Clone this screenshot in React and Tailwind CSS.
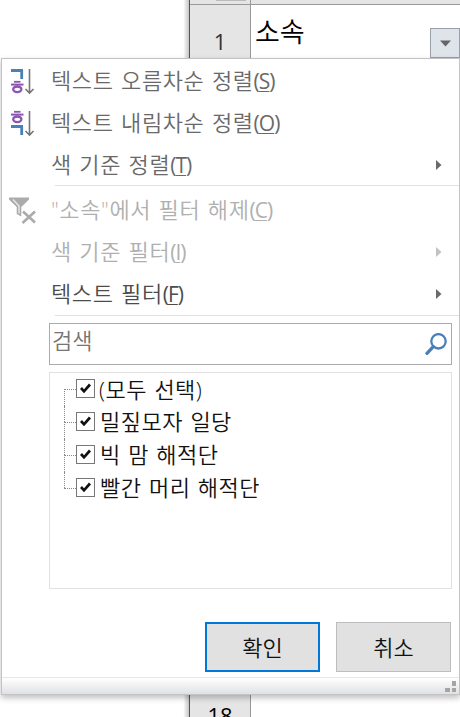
import React, { useState } from "react";

const MENU_TOP = [
  { label: "텍스트 오름차순 정렬", hotkey: "S", icon: "asc" },
  { label: "텍스트 내림차순 정렬", hotkey: "O", icon: "desc" },
  { label: "색 기준 정렬", hotkey: "T", submenu: true },
];

const MENU_FILTER = [
  { label: "\"소속\"에서 필터 해제", hotkey: "C", icon: "clear", disabled: true },
  { label: "색 기준 필터", hotkey: "I", submenu: true, disabled: true },
  { label: "텍스트 필터", hotkey: "F", submenu: true, strong: true },
];

const OPTIONS = ["(모두 선택)", "밀짚모자 일당", "빅 맘 해적단", "빨간 머리 해적단"];

const SortIcon = ({ desc }) => (
  <svg className="block" width="28" height="28" viewBox="0 0 28 28" fill="none">
    {/* Giyeok */}
    <path
      d={desc ? "M3 16.5H15M13.7 16V25" : "M3 2.5H15M13.7 2V11"}
      stroke="#4a80b8"
      strokeWidth="2.8"
    />
    {/* Hieut */}
    <g stroke="#8b55b0" transform={desc ? "translate(0 -12)" : undefined}>
      <path d="M6 13.8H12.5" strokeWidth="1.8" />
      <path d="M3 16.6H15.5" strokeWidth="2" />
      <ellipse cx="9.3" cy="21.3" rx="4.1" ry="2.8" strokeWidth="2.3" />
    </g>
    <path d="M21.5 1V25M17.5 21L21.5 25L25.5 21" stroke="#757575" strokeWidth="1.6" />
  </svg>
);

const ClearFilterIcon = () => (
  <svg className="block" width="28" height="28" viewBox="0 0 28 28" fill="none">
    <path d="M1 0.5H21V2.5L13.3 10V19.5L8.7 17V10L1 2.5Z" fill="#ababab" />
    <path d="M5 2.5L11 9V16.5" stroke="#e8e8e8" strokeWidth="1.4" />
    <path d="M15 14.5L27 25.5M27 14.5L14.5 26" stroke="#ababab" strokeWidth="2.6" />
  </svg>
);

const MenuItem = ({ item }) => {
  const color = item.disabled
    ? "text-[#b0b0b0]"
    : item.strong
      ? "text-[#4c4c4c]"
      : "text-[#696969]";

  return (
    <div className={`flex h-[42px] items-center ${color}`}>
      <div className="w-[49px] shrink-0 pl-[6px]">
        {item.icon === "asc" && <SortIcon />}
        {item.icon === "desc" && <SortIcon desc />}
        {item.icon === "clear" && <ClearFilterIcon />}
      </div>
      <div className="flex items-center whitespace-nowrap pb-[4px] text-[22px] leading-[38px] font-[350]">
        <span className="tracking-[0.6px] [word-spacing:1.2px]">{item.label}</span>
        <span className="pt-[2px] text-[21px] font-normal tracking-[-1px]">
          (<span className="underline decoration-1 underline-offset-[2px]">{item.hotkey}</span>)
        </span>
      </div>
      {item.submenu && (
        <svg className="mr-[17px] mb-[3px] ml-auto" width="6" height="10" viewBox="0 0 6 10">
          <path d="M0 0L5.5 5L0 10Z" fill={item.disabled ? "#c2c2c2" : "#6a6a6a"} />
        </svg>
      )}
    </div>
  );
};

const Option = ({ label, checked, onToggle, first, last }) => (
  <div className="flex h-[33px] cursor-default items-center" onClick={onToggle}>
    {/* Tree lines */}
    <div className="flex h-full w-[12px] shrink-0 flex-col">
      <div className={`h-[16px] ${first ? "" : "border-l border-dotted border-[#888]"}`} />
      <div
        className={`flex-1 border-t border-dotted border-[#888] ${last ? "" : "border-l"}`}
      />
    </div>
    <div className="mb-[2px] flex size-[19px] shrink-0 items-center justify-center border border-[#777] bg-white">
      {checked && (
        <svg width="11" height="11" viewBox="0 0 11 11" fill="none">
          <path d="M1 5L4 8.3L10 1.5" stroke="#111" strokeWidth="2.7" />
        </svg>
      )}
    </div>
    <span
      className={`whitespace-nowrap text-[22px] font-[350] tracking-[0.5px] text-[#111] [word-spacing:1.2px] ${
        first ? "ml-[4px] leading-[33px]" : "ml-[5px] pb-[3px] leading-[30px]"
      }`}
    >
      {label}
    </span>
  </div>
);

const App = () => {
  const [checked, setChecked] = useState([true, true, true, true]);

  const toggle = (index) => {
    setChecked(
      index === 0
        ? checked.map(() => !checked[0])
        : checked.map((c, i) => (i === index ? !c : c))
    );
  };

  return (
    <div className="flex h-[717px] w-[460px] flex-col overflow-hidden bg-white font-['Open_Sans','Noto_Sans_CJK_KR',sans-serif]">
      {/* SHEET TOP */}
      <div className="flex h-[58px] shrink-0">
        <div className="w-[189px] bg-linear-to-r from-white from-97% to-[#c5c5c5]" />
        <div className="flex w-[62px] flex-col border-r border-l border-r-[#999] border-l-[#217346] bg-[#e5e5e5]">
          <div className="h-[5px] border-b border-[#999] pl-[26px]">
            <div className="h-px w-[30px] bg-[#bbb]" />
          </div>
          <div className="flex-1 pt-[19px] text-center text-[22px] leading-[34px] text-[#333]">1</div>
        </div>
        <div className="flex flex-1 flex-col">
          <div className="h-[5px] border-b border-[#999] bg-[#e5e5e5]" />
          <div className="flex flex-1 justify-between">
            <span className="pl-[4px] text-[27px] leading-[53px] font-[350] text-black">소속</span>
            <div className="flex size-[30px] items-center justify-center self-end border border-[#9a9fa8] bg-[#dfe3ea]">
              <svg width="11" height="7" viewBox="0 0 11 7">
                <path d="M0 0.5H11L5.5 6.5Z" fill="#666" />
              </svg>
            </div>
          </div>
        </div>
      </div>

      {/* FILTER MENU */}
      <div className="z-10 ml-px flex h-[637px] shrink-0 flex-col border border-[#c3c3c3] bg-white pt-[2px] shadow-[0_3px_6px_rgba(0,0,0,0.25)]">
        {MENU_TOP.map((item) => (
          <MenuItem key={item.hotkey} item={item} />
        ))}
        <div className="mt-[-2px] mb-[4px] ml-[53px] h-px shrink-0 bg-[#e1e1e1]" />
        {MENU_FILTER.map((item) => (
          <MenuItem key={item.hotkey} item={item} />
        ))}
        <div className="mt-[-1px] ml-[53px] h-px shrink-0 bg-[#e1e1e1]" />

        {/* SEARCH */}
        <div className="mt-[7px] mr-[7px] ml-[47px] flex h-[42px] shrink-0 items-center justify-between border border-[#ababab] pr-[4px] pl-[2px]">
          <span className="pb-[7px] text-[22px] leading-[33px] font-[350] text-[#757575]">검색</span>
          <svg width="22" height="23" viewBox="0 0 22 23" fill="none" stroke="#4a80b8">
            <circle cx="13.5" cy="8.3" r="7.2" strokeWidth="2.3" />
            <path d="M8.3 13.7L2 20.3" strokeWidth="3.4" strokeLinecap="round" />
          </svg>
        </div>

        {/* OPTIONS */}
        <div className="mt-[7px] mr-[7px] ml-[47px] h-[217px] shrink-0 border border-[#e1e1e1] pl-[14px]">
          {OPTIONS.map((label, i) => (
            <Option
              key={label}
              label={label}
              checked={checked[i]}
              onToggle={() => toggle(i)}
              first={i === 0}
              last={i === OPTIONS.length - 1}
            />
          ))}
        </div>

        {/* ACTIONS */}
        <div className="mt-[33px] mr-[8px] flex shrink-0 justify-end gap-[16px] text-[22px] font-[350] text-[#111]">
          <button className="h-[50px] w-[115px] border-2 border-[#0078d7] bg-[#e1e1e1]">확인</button>
          <button className="h-[50px] w-[115px] border border-[#bdbdbd] bg-[#e1e1e1]">취소</button>
        </div>

        {/* RESIZE BAR */}
        <div className="mt-auto flex h-[17px] shrink-0 items-end justify-end gap-[2px] border-t border-[#e3e8ef] bg-linear-to-b from-white to-[#dfe1e4] pr-[3px] pb-[2px]">
          <div className="h-[4px] w-[5px] bg-[#a5a5a5]" />
          <div className="flex flex-col gap-[2px]">
            <div className="h-[5px] w-[4px] bg-[#a5a5a5]" />
            <div className="h-[4px] w-[4px] bg-[#a5a5a5]" />
          </div>
        </div>
      </div>

      {/* SHEET BOTTOM */}
      <div className="flex h-[22px] shrink-0">
        <div className="w-[189px] bg-linear-to-r from-white from-97% to-[#c5c5c5]" />
        <div className="w-[62px] border-r border-l border-r-[#999] border-l-[#217346] bg-[#e5e5e5] pt-[3px] text-center text-[22px] leading-[34px] text-black">
          18
        </div>
      </div>
    </div>
  );
};

export default App;
